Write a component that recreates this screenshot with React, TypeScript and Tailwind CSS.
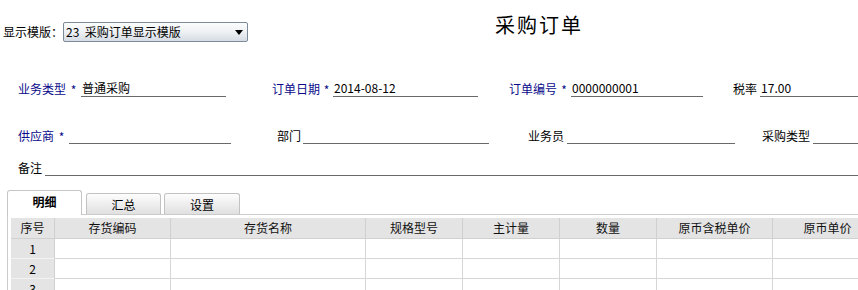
import React from "react";

type FieldProps = {
  label: string;
  blue?: boolean;
  star?: string;
  lineW: string;
  ml: string;
  gap?: string;
  value?: string;
  grow?: boolean;
};

function Field({ label, blue, star, lineW, ml, gap, value, grow }: FieldProps) {
  return (
    <div className={`flex items-end ${ml} ${grow ? "flex-1 min-w-0" : ""}`}>
      <span
        className={`text-[12px] leading-[16px] whitespace-nowrap ${blue ? "text-[#0a0a8a]" : "text-black"}`}
      >
        {label}
      </span>
      {star ? (
        <span className={`${star} text-center text-[12px] leading-[14px] text-[#0a0a8a]`}>*</span>
      ) : (
        <span className={gap ?? "w-[3px]"} />
      )}
      <div
        className={`${lineW} h-[17px] border-b border-[#6a6a6a] text-[12px] leading-[15px] pl-[1px] text-black whitespace-nowrap`}
      >
        {value}
      </div>
    </div>
  );
}

const cols = [
  { t: "序号", w: "w-[44px]" },
  { t: "存货编码", w: "w-[116px]" },
  { t: "存货名称", w: "w-[195px]" },
  { t: "规格型号", w: "w-[97px]" },
  { t: "主计量", w: "w-[97px]" },
  { t: "数量", w: "w-[97px]" },
  { t: "原币含税单价", w: "w-[116px]" },
  { t: "原币单价", w: "w-[110px]" },
];

export default function App() {
  return (
    <div className="w-[858px] h-[290px] overflow-hidden bg-white text-black font-[family-name:'Noto_Sans_CJK_SC',sans-serif]">
      {/* top */}
      <div className="flex h-[60px]">
        <div className="flex items-start pl-[3px] pt-[22px]">
          <span className="text-[12px] leading-[20px] whitespace-nowrap">显示模版：</span>
          <div className="w-[185px] h-[20px] flex items-center justify-between border border-[#7c8a99] rounded-[2px] bg-gradient-to-b from-[#fbfcfd] via-[#eef1f4] to-[#d5dce3] pl-[2px] pr-[4px]">
            <span className="text-[12px] leading-[14px] whitespace-nowrap">23&nbsp; 采购订单显示模版</span>
            <svg width="8" height="5" viewBox="0 0 8 5" className="mt-[1px]">
              <polygon points="0,0 8,0 4,5" fill="#000" />
            </svg>
          </div>
        </div>
        <div className="ml-[247px] pt-[14px] text-[20px] leading-[22px] tracking-[2px] whitespace-nowrap">
          采购订单
        </div>
      </div>

      {/* row 1 */}
      <div className="mt-[20px] flex items-end">
        <Field ml="ml-[18px]" label="业务类型" blue star="w-[15px]" lineW="w-[145px]" value="普通采购" />
        <Field ml="ml-[46px]" label="订单日期" blue star="w-[13px]" lineW="w-[145px]" value="2014-08-12" />
        <Field ml="ml-[31px]" label="订单编号" blue star="w-[14px]" lineW="w-[132px]" value="0000000001" />
        <Field ml="ml-[30px]" label="税率" gap="w-[3px]" lineW="flex-1" value="17.00" grow />
      </div>

      {/* row 2 */}
      <div className="mt-[30px] flex items-end">
        <Field ml="ml-[18px]" label="供应商" blue star="w-[15px]" lineW="w-[162px]" />
        <Field ml="ml-[46px]" label="部门" gap="w-[2px]" lineW="w-[186px]" />
        <Field ml="ml-[39px]" label="业务员" gap="w-[3px]" lineW="w-[168px]" />
        <Field ml="ml-[27px]" label="采购类型" gap="w-[3px]" lineW="flex-1" grow />
      </div>

      {/* row 3 */}
      <div className="mt-[15px] flex items-end">
        <Field ml="ml-[18px]" label="备注" gap="w-[3px]" lineW="flex-1" grow />
      </div>

      {/* tabs */}
      <div className="mt-[14px] h-[24px] flex items-end pl-[7px]">
        <div className="relative z-10 -mb-px w-[75px] h-[25px] bg-white border-x border-t border-[#c6c6c6] rounded-t-[3px] flex justify-center pt-[4px]">
          <span className="text-[12px] leading-[14px] font-bold">明细</span>
        </div>
        <div className="ml-[4px] w-[75px] h-[21px] border-x border-t border-[#c2c2c2] rounded-t-[3px] bg-gradient-to-b from-[#fdfdfd] to-[#e0e0e0] flex items-center justify-center pt-[2px]">
          <span className="text-[12px] leading-[14px]">汇总</span>
        </div>
        <div className="ml-[3px] w-[76px] h-[21px] border-x border-t border-[#c2c2c2] rounded-t-[3px] bg-gradient-to-b from-[#fdfdfd] to-[#e0e0e0] flex items-center justify-center pt-[2px]">
          <span className="text-[12px] leading-[14px]">设置</span>
        </div>
      </div>

      {/* panel */}
      <div className="ml-[7px] border-l border-t border-[#cbcbcb] pl-[3px] pt-[3px]">
        <div className="flex h-[21px] bg-[#e4e4e4]">
          {cols.map((c, i) => (
            <div
              key={i}
              className={`${c.w} shrink-0 h-[21px] border-r border-b border-[#d0d0d0] flex items-center justify-center text-[12px] leading-[14px] text-[#111] whitespace-nowrap`}
            >
              {c.t}
            </div>
          ))}
        </div>
        {[1, 2, 3, 4].map((n) => (
          <div key={n} className="flex h-[20px]">
            {cols.map((c, i) =>
              i === 0 ? (
                <div
                  key={i}
                  className={`${c.w} shrink-0 h-[20px] bg-[#e4e4e4] border-r border-b border-r-[#d0d0d0] border-b-[#f2f2f2] flex items-center justify-center text-[12px] leading-[14px]`}
                >
                  {n}
                </div>
              ) : (
                <div key={i} className={`${c.w} shrink-0 h-[20px] border-r border-b border-[#d6d6d6]`} />
              )
            )}
          </div>
        ))}
      </div>
    </div>
  );
}
